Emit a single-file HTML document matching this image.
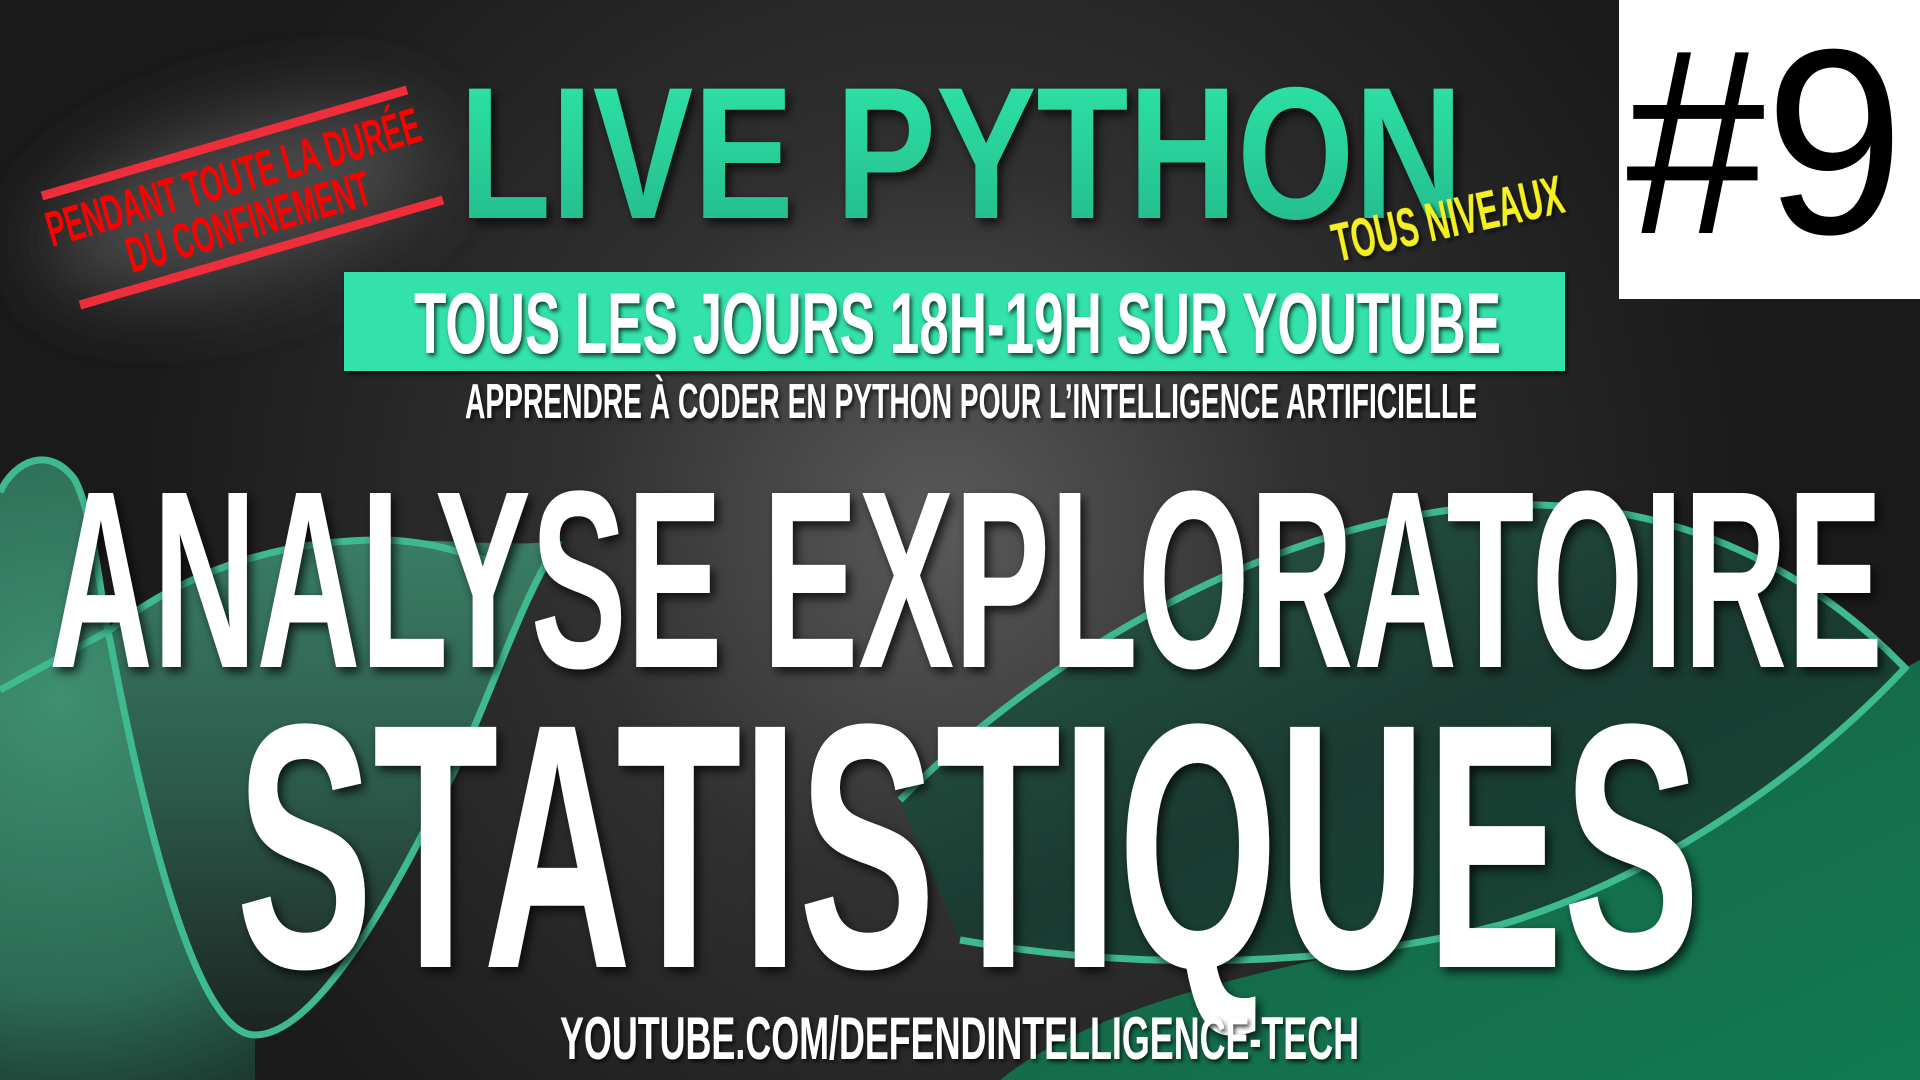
<!DOCTYPE html>
<html><head><meta charset="utf-8"><style>
html,body{margin:0;padding:0;background:#1e1e1e;overflow:hidden}
svg{display:block}
text{font-family:"Liberation Sans",sans-serif;font-weight:bold}
</style></head><body>
<svg width="1920" height="1080" viewBox="0 0 1920 1080" xmlns="http://www.w3.org/2000/svg">
<defs>
<radialGradient id="bg" cx="940" cy="527" r="820" gradientUnits="userSpaceOnUse">
<stop offset="0" stop-color="#5a5a5a"/><stop offset="0.45" stop-color="#303030"/><stop offset="1" stop-color="#1a1a1a"/></radialGradient>
<linearGradient id="gl" x1="0" y1="0" x2="0" y2="1"><stop offset="0" stop-color="#2fe8aa"/><stop offset="1" stop-color="#24b689"/></linearGradient>
<radialGradient id="gfL" cx="60" cy="700" r="420" gradientUnits="userSpaceOnUse"><stop offset="0" stop-color="#3f8f72"/><stop offset="0.7" stop-color="#2c6a54"/><stop offset="1" stop-color="#1d3a30"/></radialGradient>
<linearGradient id="gfM" x1="0" y1="540" x2="0" y2="1035" gradientUnits="userSpaceOnUse"><stop offset="0" stop-color="#3a7d65"/><stop offset="0.5" stop-color="#2c5a4a"/><stop offset="1" stop-color="#1c2421"/></linearGradient>
<linearGradient id="gfR" x1="0" y1="0" x2="1" y2="1"><stop offset="0" stop-color="#2c5e4d"/><stop offset="0.5" stop-color="#1b3a31"/><stop offset="1" stop-color="#134a37"/></linearGradient>
<linearGradient id="gfBR" x1="0" y1="0" x2="1" y2="1"><stop offset="0" stop-color="#185e44"/><stop offset="1" stop-color="#127a52"/></linearGradient>
<filter id="blur" x="-50%" y="-50%" width="200%" height="200%"><feGaussianBlur stdDeviation="40"/></filter>
<filter id="sh" x="-5%" y="-10%" width="110%" height="130%"><feDropShadow dx="4" dy="5" stdDeviation="5" flood-color="#000" flood-opacity="0.75"/></filter>
<filter id="sh2" x="-5%" y="-10%" width="110%" height="130%"><feDropShadow dx="2" dy="3" stdDeviation="2" flood-color="#000" flood-opacity="0.7"/></filter>
</defs>
<rect width="1920" height="1080" fill="url(#bg)"/>
<ellipse cx="240" cy="200" rx="200" ry="80" transform="rotate(-16 240 200)" fill="#4a4a4a" filter="url(#blur)"/>

<!-- green waves -->
<path d="M0,492 C15,460 50,445 75,480 C95,520 100,600 110,640 C150,850 200,1035 255,1035 L255,1080 L0,1080 Z" fill="url(#gfL)"/>
<path d="M110,640 C150,850 200,1035 255,1035 C320,1035 400,880 450,780 C490,700 520,600 560,540 C520,548 470,540 380,540 C300,540 200,560 110,630 Z" fill="url(#gfM)"/>
<path d="M900,800 C1050,650 1300,500 1540,505 C1700,510 1820,580 1905,668 C1800,780 1650,880 1500,925 C1300,975 1100,965 960,940 Z" fill="url(#gfR)"/>
<path d="M1905,668 L1920,660 L1920,1080 L1000,1080 C1100,1000 1300,960 1500,925 C1650,880 1800,780 1905,668 Z" fill="url(#gfBR)"/>
<g fill="none" stroke="#3fba8f" stroke-width="7">
<path d="M0,492 C15,460 50,445 75,480 C95,520 100,600 110,640 C150,850 200,1035 255,1035 C320,1035 400,880 450,780 C490,700 520,600 560,540"/>
<path d="M0,690 L110,630 C200,560 300,540 380,540 C430,540 470,555 500,565"/>
<path d="M900,800 C1050,650 1300,500 1540,505 C1700,510 1820,580 1905,668 C1800,780 1650,880 1500,925 C1300,975 1100,965 960,940"/>
</g>

<!-- red stamp -->
<g stroke="#ee2e3a" stroke-width="9">
<line x1="42" y1="196" x2="407" y2="90"/>
<line x1="80" y1="305" x2="443" y2="200"/>
</g>
<text transform="translate(52,247) rotate(-16)" font-size="50" fill="#ff0000" textLength="387" lengthAdjust="spacingAndGlyphs">PENDANT TOUTE LA DURÉE</text>
<text transform="translate(132,273) rotate(-16)" font-size="50" fill="#ff0000" textLength="252" lengthAdjust="spacingAndGlyphs">DU CONFINEMENT</text>

<!-- LIVE PYTHON -->
<text x="459" y="218" font-size="188" fill="url(#gl)" filter="url(#sh)" textLength="1004" lengthAdjust="spacingAndGlyphs">LIVE PYTHON</text>
<text transform="translate(1337,262) rotate(-12.3)" font-size="55" fill="#f4f023" filter="url(#sh2)" textLength="235" lengthAdjust="spacingAndGlyphs">TOUS NIVEAUX</text>

<!-- banner -->
<rect x="344" y="272" width="1221" height="99" fill="#33e2aa" filter="url(#sh2)"/>
<text x="414" y="353" font-size="86" fill="#fff" filter="url(#sh2)" textLength="1087" lengthAdjust="spacingAndGlyphs">TOUS LES JOURS 18H-19H SUR YOUTUBE</text>
<text x="465" y="418" font-size="49" fill="#fff" filter="url(#sh2)" textLength="1012" lengthAdjust="spacingAndGlyphs">APPRENDRE À CODER EN PYTHON POUR L’INTELLIGENCE ARTIFICIELLE</text>

<!-- #9 -->
<rect x="1619" y="0" width="301" height="299" fill="#fff"/>
<text x="1626" y="233" font-size="264" fill="#000" style="font-weight:normal" textLength="278" lengthAdjust="spacingAndGlyphs">#9</text>

<!-- main titles -->
<text x="49" y="667" font-size="253" fill="#fff" filter="url(#sh)" textLength="1834" lengthAdjust="spacingAndGlyphs">ANALYSE EXPLORATOIRE</text>
<text x="236" y="967" font-size="349" fill="#fff" filter="url(#sh)" textLength="1464" lengthAdjust="spacingAndGlyphs">STATISTIQUES</text>
<text x="560" y="1059" font-size="60" fill="#fff" filter="url(#sh2)" textLength="799" lengthAdjust="spacingAndGlyphs">YOUTUBE.COM/DEFENDINTELLIGENCE-TECH</text>
</svg>
</body></html>
